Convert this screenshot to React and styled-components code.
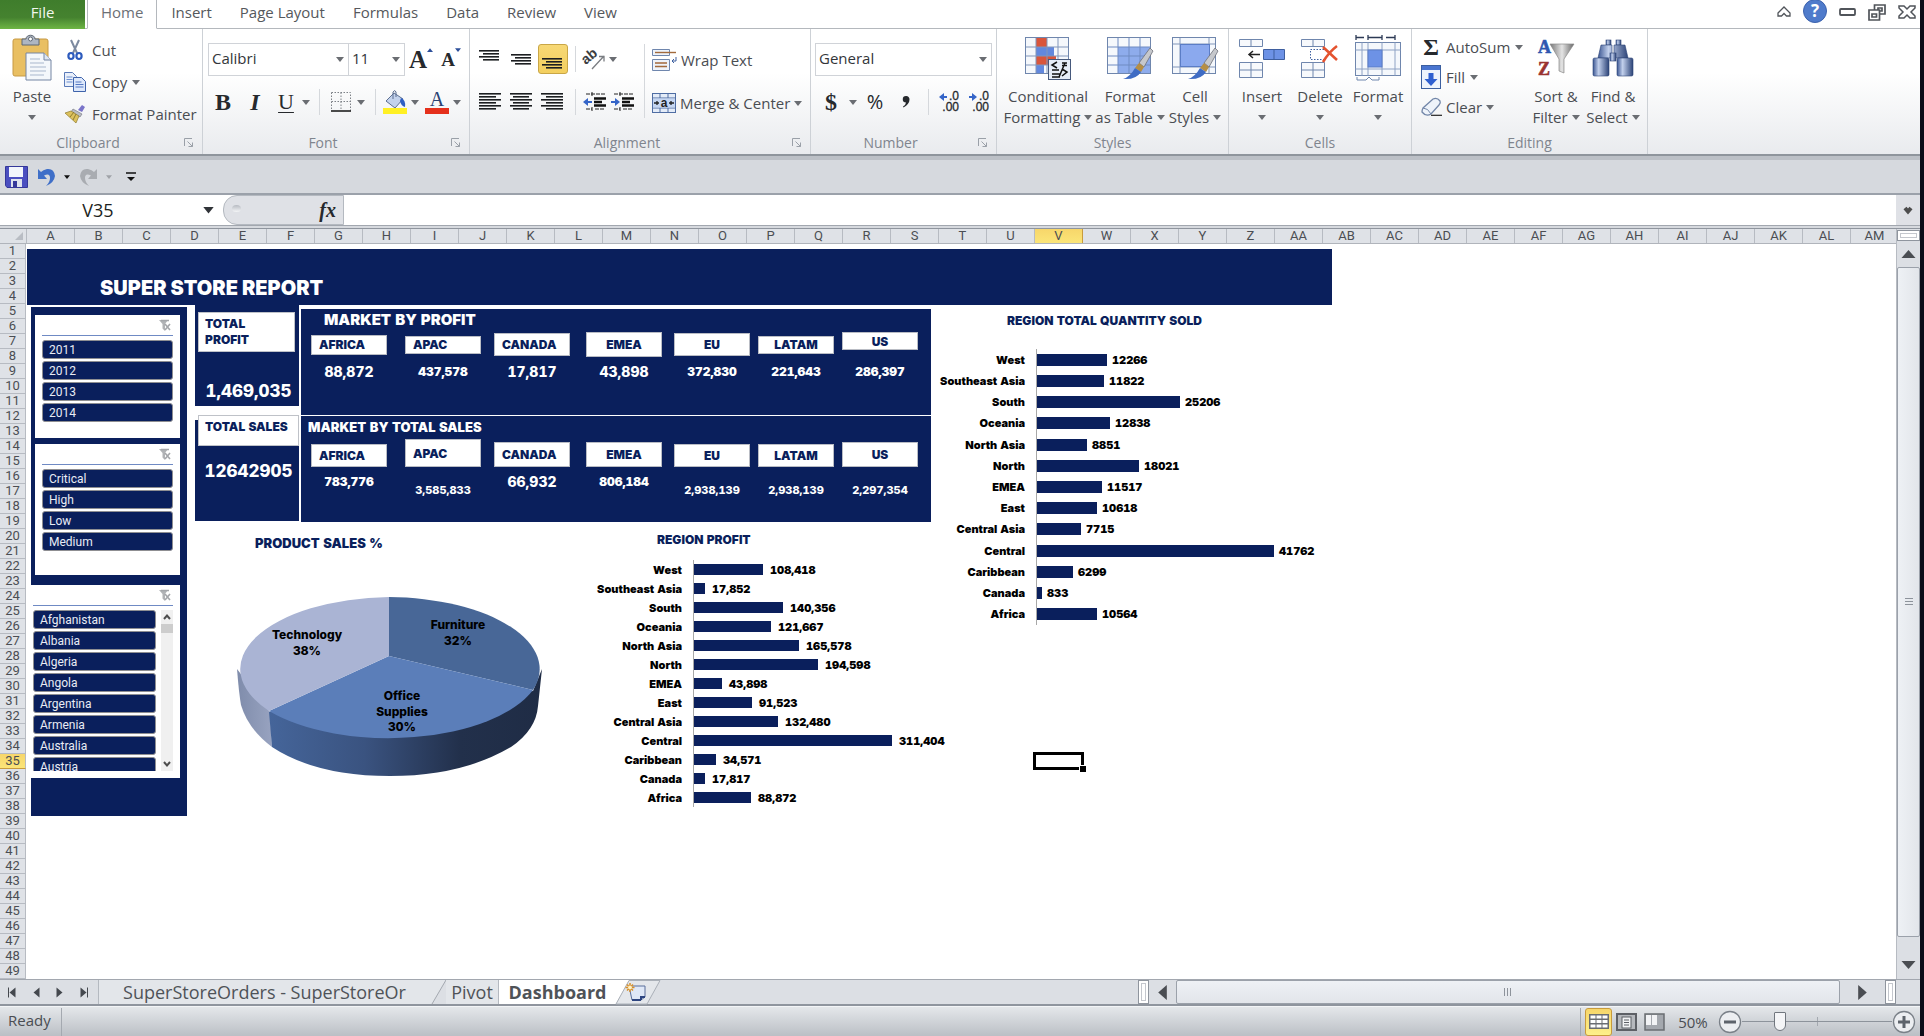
import React from 'react';
import styled, { createGlobalStyle, css } from 'styled-components';

const NAVY = '#0a1f5c';
const UI_FONT = '"Open Sans", "Noto Sans", sans-serif';
const GRID_FONT = 'Roboto, "Liberation Sans", sans-serif';
const HEAVY_FONT = 'Inter, "Liberation Sans", sans-serif';

const GlobalStyle = createGlobalStyle`
  * {
    box-sizing: border-box;
  }

  body {
    margin: 0;
    background: #0a0d18;
    font-family: ${UI_FONT};
  }

  button, input, select {
    font: inherit;
    color: inherit;
    margin: 0;
    padding: 0;
    border: none;
    border-radius: 0;
    background: none;
  }

  svg {
    display: block;
    flex: none;
    overflow: visible;
  }
`;

const Window = styled.div`
  min-height: 100vh;
  display: flex;
  flex-direction: column;
  background: #d6d9de;
  border-right: 4px solid #0a0d18;
  overflow: hidden;
`;

/* ---------- ribbon ---------- */

const TabBar = styled.nav`
  display: flex;
  height: 29px;
  background: #fff;
  border-bottom: 1px solid #b4b8bd;
  font-size: 15px;
  color: #55585c;
`;

const FileTab = styled.button`
  width: 85px;
  height: 29px;
  margin-right: 2px;
  padding-bottom: 5px;
  color: #f2f8ee;
  background: linear-gradient(#3f7d2c, #45822f 60%, #6db544);
`;

const RibbonTab = styled.button`
  height: 29px;
  padding: 0 13px 5px;
  border: 1px solid transparent;
  border-top: none;
  white-space: nowrap;

  ${props => props.$active && css`
    background: #fff;
    border-color: #b4b8bd;
    border-bottom-color: #fff;
    color: #6c6f75;
  `}
`;

const WindowControls = styled.div`
  display: flex;
  align-items: center;
  gap: 12px;
  height: 24px;
  margin-left: auto;
  padding-right: 4px;
`;

const IconButton = styled.button`
  display: flex;
  align-items: center;
  justify-content: center;
  flex: none;
  width: ${props => props.$w || 24}px;
  height: ${props => props.$h || 30}px;
`;

const Ribbon = styled.div`
  display: flex;
  height: 127px;
  background: linear-gradient(#fff 35%, #e9ebee);
  border-bottom: 2px solid #8f959c;
  color: #4a4d52;
  font-size: 15px;
`;

const Group = styled.section`
  display: flex;
  flex-direction: column;
  flex: none;
  width: ${props => props.$w}px;
  border-right: 1px solid #cdd1d6;
`;

const GroupBody = styled.div`
  display: flex;
  height: 102px;
  padding-left: ${props => props.$pad || 4}px;
`;

const GroupFooter = styled.div`
  display: grid;
  grid-template-columns: 1fr ${props => (props.$launcher ? '26px' : '')};
  align-items: center;
  justify-items: center;
  height: 23px;
  color: #7f858e;
`;

const GroupName = styled.h2`
  margin: 0;
  font-size: 14px;
  font-weight: 400;
`;

const Stack = styled.div`
  display: flex;
  flex-direction: column;
  gap: ${props => props.$gap || 0}px;
  padding-top: ${props => props.$top || 0}px;
  width: ${props => (props.$w ? `${props.$w}px` : 'auto')};
`;

const ToolRow = styled.div`
  display: flex;
  align-items: center;
  height: ${props => props.$h || 32}px;
`;

const Divider = styled.span`
  flex: none;
  width: 1px;
  height: ${props => props.$h || 26}px;
  margin: 0 7px;
  background: #d5d8dc;
`;

const SmallButton = styled.button`
  display: flex;
  align-items: center;
  gap: ${props => props.$gap || 6}px;
  height: ${props => props.$h || 32}px;
  white-space: nowrap;
`;

const IconSlot = styled.span`
  display: flex;
  justify-content: center;
  width: ${props => props.$w}px;
`;

const BigButton = styled.button`
  display: flex;
  flex-direction: column;
  align-items: center;
  width: ${props => props.$w}px;
  padding-top: 5px;
  line-height: 21px;
  white-space: nowrap;
`;

const BigIcon = styled.span`
  display: flex;
  align-items: center;
  height: 48px;
  margin-bottom: 4px;
`;

const BigLine = styled.span`
  display: flex;
  align-items: center;
  gap: 4px;
  height: 21px;
`;

const Combo = styled.div`
  display: grid;
  align-items: center;
  width: ${props => props.$w}px;
  height: 33px;
  border: 1px solid #d0d3d8;
  background: #fff;
  margin-right: ${props => (props.$joined ? -1 : 0)}px;

  > * {
    grid-area: 1 / 1;
  }

  > svg {
    justify-self: end;
    margin-right: 4px;
    pointer-events: none;
  }
`;

const ComboSelect = styled.select`
  appearance: none;
  width: 100%;
  height: 100%;
  padding: 0 14px 3px 3px;
  color: #33363a;
`;

const Glyph = styled.span`
  font-family: ${props => (props.$sans ? UI_FONT : '"Liberation Serif", serif')};
  font-size: ${props => props.$size || 24}px;
  font-weight: ${props => (props.$light ? 400 : 700)};
  font-style: ${props => (props.$italic ? 'italic' : 'normal')};
  text-decoration: ${props => (props.$underline ? 'underline' : 'none')};
  text-decoration-thickness: 1px;
  text-underline-offset: 3px;
  line-height: 1;
  color: #26292d;
`;

const SizeButton = styled(IconButton)`
  > svg {
    align-self: flex-start;
    margin-top: 4px;
  }
`;

const Pressed = styled(IconButton)`
  border: 1px solid #c9a646;
  border-radius: 3px;
  background: linear-gradient(#f7d875, #f3cf5f);
`;

/* ---------- quick access and formula bar ---------- */

const QuickAccess = styled.div`
  display: flex;
  align-items: center;
  height: 39px;
  padding: 1px 0 0 4px;
  border-top: 4px solid #bcc0c6;
  border-bottom: 2px solid #9ba1aa;
  background: #d6d9de;
`;

const FormulaBar = styled.div`
  display: flex;
  height: 31px;
  background: #dfe1e6;
  border-bottom: 1px solid #a2a7af;
`;

const NameBox = styled.div`
  display: flex;
  align-items: center;
  width: 223px;
  background: #fff;
`;

const NameInput = styled.input`
  width: 196px;
  text-align: center;
  font-size: 18px;
  color: #1d1f22;
`;

const FxArea = styled.div`
  display: flex;
  align-items: center;
  width: 121px;
  background: #fff;
`;

const FxPill = styled.div`
  display: flex;
  align-items: center;
  justify-content: space-between;
  width: 100%;
  height: 100%;
  padding: 0 7px 0 8px;
  border: 1px solid #b4b9c0;
  border-radius: 14px 0 0 14px;
  background: #dfe1e6;
`;

const FxDot = styled.span`
  width: 9px;
  height: 7px;
  margin-bottom: 3px;
  border-radius: 50%;
  background: linear-gradient(#b6bac1, #f4f5f7);
`;

const FormulaInput = styled.input`
  flex: 1;
  background: #fff;
`;

/* ---------- sheet ---------- */

const Workbook = styled.main`
  display: flex;
  flex: 1;
  margin-top: 2px;
  background: #dfe2e7;
  border-top: 1px solid #8f959e;
`;

const SheetArea = styled.div`
  flex: 1;
  min-width: 0;
  overflow: hidden;
  background: #fff;
`;

const ColumnHeads = styled.div`
  display: flex;
  height: 15px;
  background: #dfe2e7;
  border-bottom: 1px solid #b0b4bb;
`;

const Corner = styled.div`
  display: flex;
  justify-content: flex-end;
  align-items: flex-end;
  flex: none;
  width: 27px;
  padding: 3px;
  border-right: 1px solid #b7bbc2;
`;

const headCell = css`
  display: flex;
  align-items: center;
  justify-content: center;
  flex: none;
  font-family: ${GRID_FONT};
  font-size: 13px;
  line-height: 14px;
  color: #4b4e53;
  background: ${props => (props.$active ? 'linear-gradient(#f7d66a, #fbe578)' : '#dfe2e7')};
`;

const ColumnHead = styled.div`
  ${headCell}
  width: 48px;
  border-right: 1px solid ${props => (props.$active ? '#c89b3c' : '#b7bbc2')};
`;

const SheetBody = styled.div`
  display: flex;
`;

const RowHeads = styled.div`
  flex: none;
  width: 26px;
`;

const RowHead = styled.div`
  ${headCell}
  height: 15px;
  border-right: 1px solid #b7bbc2;
  border-bottom: 1px solid ${props => (props.$active ? '#c89b3c' : '#b7bbc2')};
`;

const Canvas = styled.div`
  position: relative;
  flex: 1;
  min-width: 0;
  padding: 5px 0 0 1px;
`;

const ActiveCell = styled.div`
  position: absolute;
  left: ${props => props.$col * 48 - 1}px;
  top: ${props => props.$row * 15 - 2}px;
  width: 51px;
  height: 18px;
  border: 3px solid #000;

  &::after {
    content: '';
    position: absolute;
    right: -5px;
    bottom: -5px;
    width: 6px;
    height: 6px;
    border: 1px solid #fff;
    border-width: 1px 0 0 1px;
    background: #000;
  }
`;

/* ---------- dashboard ---------- */

const Banner = styled.h1`
  width: 1305px;
  height: 56px;
  margin: 0;
  padding: 27px 0 0 73px;
  background: ${NAVY};
  color: #fff;
  font-family: ${HEAVY_FONT};
  font-size: 20px;
  font-weight: 900;
  line-height: 24px;
`;

const Dashboard = styled.div`
  display: flex;
  align-items: flex-start;
  font-family: ${HEAVY_FONT};
  font-weight: 800;
  font-variant-numeric: tabular-nums;
`;

const SlicerColumn = styled.aside`
  width: 156px;
  margin: 2px 8px 0 4px;
  padding: 8px 0 38px;
  background: ${NAVY};
`;

const Slicer = styled.section`
  width: ${props => (props.$scroll ? 149 : 145)}px;
  height: ${props => props.$h}px;
  margin: 0 0 ${props => props.$after || 0}px ${props => (props.$scroll ? 0 : 4)}px;
  padding: 0 7px 0 ${props => (props.$scroll ? 2 : 7)}px;
  background: #fff;
`;

const SlicerHead = styled.div`
  display: flex;
  align-items: center;
  justify-content: flex-end;
  height: 21px;
  padding-right: 2px;
  border-bottom: 1px solid #6f8ac4;
`;

const SlicerBody = styled.div`
  display: flex;
  gap: 5px;
  height: 165px;
  padding-top: 4px;
`;

const SlicerList = styled.div`
  display: flex;
  flex-direction: column;
  flex: 1;
  gap: 2px;
  overflow: hidden;
`;

const SlicerItem = styled.button`
  flex: none;
  height: 19px;
  padding: 0 6px;
  border: 1px solid #8f8f92;
  border-radius: 3px;
  background: ${NAVY};
  color: #e9ecf4;
  font-family: ${GRID_FONT};
  font-size: 12px;
  font-weight: 400;
  line-height: 16px;
  text-align: left;
`;

const SlicerScroll = styled.div`
  display: flex;
  flex-direction: column;
  align-items: center;
  width: 12px;
  background: #f0f0f0;
`;

const SlicerThumb = styled.span`
  width: 12px;
  height: 9px;
  margin-bottom: auto;
  background: #cdcdcd;
`;

const Middle = styled.div`
  width: 736px;
`;

const Row = styled.div`
  display: flex;
  align-items: flex-start;
`;

const KpiColumn = styled.div`
  display: flex;
  flex-direction: column;
  gap: 9px;
  width: 104px;
  margin-right: 2px;
`;

const Kpi = styled.section`
  padding: ${props => (props.$raised ? 0 : 7)}px 0 0 3px;
  height: ${props => (props.$raised ? 106 : 101)}px;
  background: ${props => (props.$raised ? `linear-gradient(#fff 5px, ${NAVY} 5px)` : NAVY)};
  color: #fff;
`;

const KpiLabel = styled.h2`
  width: ${props => (props.$wide ? 101 : 97)}px;
  height: ${props => (props.$wide ? 31 : 40)}px;
  margin: 0;
  padding: 3px 0 0 6px;
  border: 1px solid #bfc2c8;
  background: #fff;
  color: ${NAVY};
  font-size: 12px;
  font-weight: 900;
  line-height: 16px;
`;

const KpiValue = styled.p`
  margin: ${props => props.$top}px 0 0;
  font-size: 17px;
  line-height: 20px;
  text-align: center;
`;

const Markets = styled.div`
  display: grid;
  gap: 1px;
  width: 630px;
  margin-top: 4px;
`;

const Market = styled.section`
  height: 106px;
  background: ${NAVY};
  color: #fff;
`;

const MarketTitle = styled.h2`
  margin: 0;
  height: 23px;
  padding: 3px 0 0 ${props => (props.$small ? 7 : 23)}px;
  font-size: ${props => (props.$small ? 13 : 15)}px;
  font-weight: 900;
  line-height: 16px;
`;

const MarketGrid = styled.div`
  display: grid;
  grid-template-columns: 94px 89px 92px 88px 84px 84px 75px;
  padding-left: 10px;
`;

const MarketCell = styled.div`
  display: grid;
  grid-template-rows: ${props => props.$band}px auto;
  width: 76px;
`;

const MarketTag = styled.h3`
  display: flex;
  align-items: center;
  justify-content: ${props => (props.$centered ? 'center' : 'flex-start')};
  align-self: ${props => props.$align || 'center'};
  height: ${props => props.$h}px;
  margin: 0;
  padding: 0 7px;
  border: 1px solid #b9bcc4;
  background: #fff;
  color: ${NAVY};
  font-size: 12px;
  font-weight: 900;
`;

const sizes = { lg: 14, md: 12, sm: 11 };

const MarketValue = styled.p`
  margin: 0;
  padding-top: ${props => (props.$size === 'sm' ? 15 : 7)}px;
  font-size: ${props => sizes[props.$size]}px;
  font-weight: ${props => (props.$size === 'md' ? 900 : 800)};
  line-height: 16px;
  text-align: center;
`;

const ChartTitle = styled.h2`
  margin: 0;
  padding: ${props => props.$top}px 0 0 ${props => props.$indent}px;
  height: ${props => props.$h}px;
  font-size: ${props => props.$size || 12}px;
  font-weight: 900;
  line-height: 16px;
  color: ${NAVY};
  white-space: nowrap;
`;

const Chart = styled.section`
  flex: none;
  width: ${props => props.$w}px;
`;

const Bars = styled.dl`
  display: grid;
  grid-template-columns: ${props => props.$labels}px 1fr;
  grid-auto-rows: 1fr;
  column-gap: 11px;
  height: ${props => props.$h}px;
  margin: 0;
  font-size: 11px;
  font-weight: 900;
  line-height: 16px;
  color: #000;
`;

const BarLabel = styled.dt`
  display: flex;
  align-items: center;
  justify-content: flex-end;
  white-space: nowrap;
`;

const BarCell = styled.dd`
  display: flex;
  align-items: center;
  gap: ${props => props.$gap}px;
  margin: 0;
  border-left: 1px solid #a8a8a8;
`;

const Bar = styled.span`
  flex: none;
  height: ${props => props.$thick}px;
  background: ${NAVY};
`;

const PieText = styled.text`
  font-family: ${HEAVY_FONT};
  font-size: 12px;
  font-weight: 800;
  text-anchor: middle;
`;

const PieBox = styled.div`
  padding: 36px 0 0 41px;
`;

/* ---------- scrollbars, tabs and status ---------- */

const VScroll = styled.div`
  display: flex;
  flex-direction: column;
  align-items: center;
  width: 24px;
  padding-top: 1px;
  background: #dcdfe4;
  border-left: 1px solid #b7bbc2;
`;

const SplitHandle = styled.span`
  flex: none;
  width: ${props => (props.$vertical ? 11 : 23)}px;
  height: ${props => (props.$vertical ? 24 : 11)}px;
  border: 1px solid #8f959e;
  background: #fff;
  box-shadow: inset 0 0 0 2px #fff, inset 0 0 0 3px #c4c7cd;
`;

const ScrollThumb = styled.span`
  display: flex;
  align-items: center;
  justify-content: center;
  flex: 1;
  align-self: stretch;
  margin-bottom: ${props => (props.$vertical ? 14 : 0)}px;
  border: 1px solid #9ba1aa;
  border-radius: 2px;
  background: ${props => (props.$vertical
    ? 'linear-gradient(90deg, #eef1f5, #e2e5ea)'
    : 'linear-gradient(#eef1f5, #e2e5ea)')};
`;

const SheetTabs = styled.div`
  display: flex;
  align-items: flex-start;
  height: 27px;
  border-top: 1px solid #a2a7af;
  border-bottom: 2px solid #8f959e;
  background: #dcdfe4;
`;

const TabNav = styled.div`
  display: flex;
  width: 98px;
`;

const SheetTab = styled.button`
  display: flex;
  align-items: center;
  justify-content: center;
  flex: none;
  width: ${props => props.$w}px;
  height: 24px;
  padding-bottom: 1px;
  font-size: 18px;
  line-height: 22px;
  color: #4f5358;
  background: ${props => (props.$active ? '#fff' : '#e3e6ea')};
  font-weight: ${props => (props.$active ? 700 : 400)};
  border-left: ${props => (props.$edge ? '1px solid #b4b9c0' : 'none')};
  white-space: nowrap;
`;

const HScroll = styled.div`
  display: flex;
  align-items: center;
  flex: none;
  width: calc(40% - 10px);
  height: 24px;
  margin-left: auto;
  margin-right: 24px;
`;

const StatusBar = styled.footer`
  display: flex;
  align-items: center;
  height: 30px;
  border-top: 1px solid #f3f5f7;
  background: linear-gradient(#e4e7ea, #bbbfc5);
  color: #4a4d52;
  font-size: 15px;
`;

const StatusText = styled.span`
  height: 28px;
  padding: 2px 10px 0 8px;
  border-right: 1px solid #a4a9b0;
`;

const StatusTools = styled.div`
  display: flex;
  align-items: center;
  margin-left: auto;
  height: 28px;
  padding: 0 4px;
  border-left: 1px solid #a4a9b0;
`;

const ViewButton = styled(IconButton)`
  border: 1px solid ${props => (props.$active ? '#c89b3c' : 'transparent')};
  border-radius: 3px;
  background: ${props => (props.$active ? 'linear-gradient(#f7d66a, #fdf08a)' : 'none')};
`;

const ZoomSlider = styled.input`
  appearance: none;
  width: 150px;
  height: 20px;
  background:
    linear-gradient(#8d939b, #8d939b) center / 100% 1px no-repeat,
    linear-gradient(#a4a9b0, #a4a9b0) center / 1px 9px no-repeat;

  &::-webkit-slider-thumb {
    appearance: none;
    width: 12px;
    height: 19px;
    border: 1px solid #70767e;
    border-radius: 1px 1px 6px 6px;
    background: #f4f5f7;
  }
`;

/* ---------- icons ---------- */

const Caret = ({ color = '#6a6d72', size = 8, up }) => (
  <svg width={size} height={size / 2 + 1} viewBox="0 0 8 5">
    <path d={up ? 'M0 5h8L4 0z' : 'M0 0h8L4 5z'} fill={color} />
  </svg>
);

const Launcher = () => (
  <svg width="10" height="10" viewBox="0 0 10 10" fill="none" stroke="#9aa0a8">
    <path d="M.5 8V.5H8M3.500 3.500l5 5M8.500 4.500v4h-4" />
  </svg>
);

const PasteIcon = () => (
  <svg width="40" height="46" viewBox="0 0 40 46">
    <rect x="1" y="4" width="35" height="37" rx="2" fill="#e9bf62" stroke="#c79a45" />
    <path d="M10 4h4c0-5 9-5 9 0h4v6H10z" fill="#aeb6c2" stroke="#5f6874" />
    <circle cx="18.500" cy="4" r="2" fill="#fff" stroke="#5f6874" />
    <path d="M14 18h18l7 7v20H14z" fill="#f4f7fb" stroke="#7485a3" />
    <path d="M32 18v7h7" fill="#dfe6f0" stroke="#7485a3" />
    <path d="M18 24h10M18 28h14M18 32h16M18 36h16M18 40h14" stroke="#a9b7cd" />
  </svg>
);

const CutIcon = () => (
  <svg width="16" height="20" viewBox="0 0 16 20" fill="none">
    <path d="M4 0l6 13M12 0L6 13" stroke="#7d8aa0" strokeWidth="2" />
    <ellipse cx="4" cy="16" rx="2.600" ry="3" stroke="#2d5bbd" strokeWidth="2.200" />
    <ellipse cx="12" cy="16" rx="2.600" ry="3" stroke="#2d5bbd" strokeWidth="2.200" />
  </svg>
);

const CopyIcon = () => (
  <svg width="22" height="20" viewBox="0 0 22 20">
    <path d="M.5.5h8l4 4v10H.5z" fill="#eaf0fa" stroke="#5a7ab8" />
    <path d="M2.500 5h6M2.500 7.500h6M2.500 10h6" stroke="#6c8fd0" />
    <path d="M9.500 5.500h8l4 4v10h-12z" fill="#dde8fb" stroke="#3f63ab" />
    <path d="M11.500 10h6M11.500 12.500h8M11.500 15h8" stroke="#5579c4" />
  </svg>
);

const PainterIcon = () => (
  <svg width="20" height="18" viewBox="0 0 20 18">
    <path d="M13 5l4-5 3 2-3 5z" fill="#7a74c9" />
    <path d="M8 4l9 5-2 3-9-5z" fill="#b9bcc4" stroke="#6d7078" strokeWidth=".6" />
    <path d="M6 6l8 5-3 7L0 8z" fill="#dcc15c" stroke="#8f7b2f" strokeWidth=".7" />
    <path d="M5 12l4-5M8 15l3-6" stroke="#8f7b2f" />
  </svg>
);

const BordersIcon = () => (
  <svg width="20" height="20" viewBox="0 0 20 20" fill="none">
    <path d="M.5.5h19v18M.5.5v18M10 .5v18M.5 9.500h19" stroke="#7d8187" strokeDasharray="1.500 1.500" />
    <path d="M0 19h20" stroke="#111" strokeWidth="1.500" />
  </svg>
);

const FillColorIcon = () => (
  <svg width="24" height="24" viewBox="0 0 24 24">
    <path d="M3 11l8-8 9 6-8 9z" fill="#c3d2ec" stroke="#5d6f91" />
    <path d="M10 9V2q2-3 3 0v5" fill="none" stroke="#5d6f91" />
    <path d="M18 8q5 2 4 9-4-1-5-6z" fill="#2f5fc4" />
    <rect y="18" width="24" height="6" fill="#fff024" />
  </svg>
);

const FontColorIcon = () => (
  <svg width="24" height="24" viewBox="0 0 24 24">
    <text x="12" y="16" textAnchor="middle" fontFamily="Liberation Serif" fontSize="20" fill="#2a4272">A</text>
    <rect y="18" width="24" height="6" fill="#e5301c" />
  </svg>
);

const CommaIcon = () => (
  <svg width="8" height="12" viewBox="0 0 8 12">
    <path d="M4 0a3.200 3.200 0 0 1 3.500 3.500Q7.500 8 1.500 11.500L1 10.500Q4 8.500 4 6.500A3.200 3.200 0 0 1 4 0z" fill="#26292d" />
  </svg>
);

const LINES = {
  top: [[0, 20], [4, 16], [0, 20], [4, 16]],
  center: [[0, 22], [3, 16], [0, 22], [3, 16], [0, 22], [3, 16]],
  left: [[0, 22], [0, 17], [0, 22], [0, 17], [0, 22], [0, 17]],
  right: [[0, 22], [5, 17], [0, 22], [5, 17], [0, 22], [5, 17]],
};

const LinesIcon = ({ kind, offset = 0 }) => (
  <svg width="22" height="26" viewBox="0 0 22 26">
    {LINES[kind].map(([x, w], i) => (
      <rect key={i} x={x} y={offset + 4 + i * 3} width={w} height="1.600" fill="#1c1e21" />
    ))}
  </svg>
);

const OrientationIcon = () => (
  <svg width="24" height="24" viewBox="0 0 24 24">
    <text x="1" y="15" transform="rotate(-40 6 14)" fontFamily="Liberation Sans" fontSize="14" fontWeight="700" fill="#3a3d41">ab</text>
    <path d="M9 22L21 9M16 9.500h5v5" fill="none" stroke="#7a7d82" strokeWidth="1.300" />
  </svg>
);

const IndentIcon = ({ flip }) => (
  <svg width="24" height="20" viewBox="0 0 24 20">
    <path d={flip ? 'M0 9h4V6l5 4-5 4v-3H0z' : 'M9 9H5V6l-5 4 5 4v-3h4z'} fill="#3565c8" />
    <path d="M3 2h20M3 17h6M12 17h9M9 0v4M9 15v4" stroke="#222" strokeDasharray="4 1" />
    <path d="M11 6.500h12M11 10h8M11 13.500h12" stroke="#111" strokeWidth="2.600" />
  </svg>
);

const WrapIcon = () => (
  <svg width="25" height="22" viewBox="0 0 25 22" fill="none">
    <path d="M.5.5h17v6H.5z" fill="#eef3fa" stroke="#6f86ad" />
    <path d="M3 3.500h21" stroke="#a26a3c" strokeWidth="1.400" />
    <path d="M.5 10.500h17v11H.5z" fill="#eef3fa" stroke="#6f86ad" />
    <path d="M3 14h12M3 17.500h12" stroke="#a26a3c" strokeWidth="1.400" />
    <path d="M24 8v4h-4M22 10l-2 2 2 2" stroke="#3c5f9f" />
  </svg>
);

const MergeIcon = () => (
  <svg width="24" height="20" viewBox="0 0 24 20">
    <rect x=".5" y=".5" width="23" height="19" fill="#e4ecf8" stroke="#4f6da3" />
    <path d="M.5 5h23M.5 15h23M8 .5V5M16 .5V5M8 15v4.500M16 15v4.500" stroke="#4f6da3" />
    <rect x="1" y="5.500" width="22" height="9" fill="#c5d6f2" />
    <path d="M2 10h5M5 8v4M17 10h5M19 8v4" stroke="#222" strokeWidth="1.300" />
    <text x="12" y="14" textAnchor="middle" fontFamily="Liberation Sans" fontSize="12" fontWeight="700" fill="#222">a</text>
  </svg>
);

const DecimalIcon = ({ flip }) => (
  <svg width="21" height="20" viewBox="0 0 21 20">
    <path d={flip ? 'M0 4h3V1l5 4-5 4V6H0z' : 'M8 4H5V1L0 5l5 4V6h3z'} fill="#3565c8" />
    <g fontFamily="Liberation Sans" fontSize="12" fill="#26292d" stroke="#26292d" strokeWidth=".3">
      <text x="20" y="8" textAnchor="end">.0</text>
      <text x="20" y="19" textAnchor="end">.00</text>
    </g>
  </svg>
);

const TableGrid = ({ children }) => (
  <svg width="48" height="44" viewBox="0 0 48 44">
    <rect x="1.500" y="1.500" width="43" height="36" fill="#f5f8fc" stroke="#6f86ad" />
    {children}
  </svg>
);

const Brush = () => (
  <g>
    <path d="M44 12l3 3-9 16-5-4z" fill="#c6c8cc" stroke="#6d7078" strokeWidth=".8" />
    <path d="M33 27l5 4-3 5-6-4z" fill="#b58e45" />
    <path d="M29 32l6 4q-5 8-18 7 7-2 12-11z" fill="#3f6cc4" />
  </g>
);

const ConditionalIcon = () => (
  <TableGrid>
    <rect x="12" y="2" width="11" height="9" fill="#d9553b" />
    <rect x="12" y="11" width="18" height="9" fill="#6288de" />
    <rect x="12" y="20" width="20" height="9" fill="#d9553b" />
    <rect x="12" y="29" width="8" height="8" fill="#6288de" />
    <path d="M12 2v35M23 2v35M34 2v35M2 11h42M2 20h42M2 29h42" stroke="#8196ba" fill="none" />
    <rect x="24.500" y="23.500" width="22" height="20" fill="#e6edf7" stroke="#46597c" />
    <path d="M33 26l-5 3 5 3M28 34h7M28 38h8M28 41h8M38 27h5M38 29.500h5M38 33l5 3-5 4M35 41l6-14" stroke="#111" strokeWidth="1.500" fill="none" />
  </TableGrid>
);

const FormatTableIcon = () => (
  <TableGrid>
    <rect x="12" y="11" width="32" height="26" fill="#8eacec" />
    <path d="M12 2v35M23 2v35M34 2v35M2 11h42M2 20h42M2 29h42" stroke="#6f8bc2" fill="none" />
    <Brush />
  </TableGrid>
);

const CellStylesIcon = () => (
  <TableGrid>
    <path d="M9 2v35M38 2v35M2 8h42M2 31h42" stroke="#8196ba" fill="none" />
    <rect x="9.500" y="8.500" width="29" height="22" fill="#8ba9ee" stroke="#5b7dc6" />
    <Brush />
  </TableGrid>
);

const InsertIcon = () => (
  <svg width="48" height="40" viewBox="0 0 48 40" fill="#f7f9fc" stroke="#6f86ad">
    <path d="M1.500 1.500h23v7h-23zM13 1.500v7M1.500 24.500h23v15h-23zM13 24.500v15M1.500 32h23" />
    <path d="M25.500 11.500h21v10h-21z" fill="#6d92e6" stroke="#3f5f9f" />
    <path d="M36 11.500v10" stroke="#3f5f9f" />
    <path d="M22 16.500H12M15 13l-4 3.500 4 3.500" fill="none" stroke="#222" strokeWidth="1.500" />
  </svg>
);

const DeleteIcon = () => (
  <svg width="40" height="40" viewBox="0 0 40 40" fill="#f7f9fc" stroke="#6f86ad">
    <path d="M1.500 1.500h23v7h-23zM13 1.500v7M1.500 24.500h23v15h-23zM13 24.500v15M1.500 32h23" />
    <path d="M24 11.500H10.500v10H24" fill="none" stroke="#3c5f9f" strokeDasharray="1.500 1.500" />
    <path d="M23 9l14 13M37 8Q29 14 23 24" fill="none" stroke="#e4532f" strokeWidth="2.600" />
  </svg>
);

const FormatCellsIcon = () => (
  <svg width="48" height="46" viewBox="0 0 48 46" fill="none" stroke="#6f86ad">
    <path d="M2 0v5M14 0v5M28 0v5M41 0v5M2 2.500h8M14 2.500h14M32 2.500h9" stroke="#2c3a55" strokeWidth="1.300" />
    <rect x="1.500" y="7.500" width="45" height="33" fill="#f5f8fc" />
    <path d="M14 7.500v33M28 7.500v33M41 7.500v33M8 7.500v33M1.500 15h45M1.500 34h45" stroke="#8ea2c4" />
    <rect x="14" y="15" width="14" height="17" fill="#6d92e6" stroke="#5b7dc6" />
    <path d="M3 42v3h9l3-3 3 3h7v-3" />
  </svg>
);

const FillIcon = () => (
  <svg width="20" height="24" viewBox="0 0 20 24">
    <rect x=".5" y=".5" width="19" height="23" fill="#eef3fc" stroke="#3c5f9f" />
    <rect x="1" y="1" width="18" height="4" fill="#4a75d0" />
    <path d="M7.500 8h5v6h4L10 21l-6.500-7h4z" fill="#2f5fd0" />
  </svg>
);

const ClearIcon = () => (
  <svg width="21" height="18" viewBox="0 0 21 18">
    <path d="M12 1q4-2 7 2 1 2-1 4L10 16q-5 3-9-2 0-2 1-4z" fill="#eef3fa" stroke="#7286a8" strokeWidth="1.300" />
    <path d="M2 10q5 0 8 6" fill="none" stroke="#7286a8" />
    <path d="M10 17.300h11" stroke="#222" strokeWidth="1.200" />
  </svg>
);

const SortIcon = () => (
  <svg width="38" height="40" viewBox="0 0 38 40">
    <defs>
      <linearGradient id="funnel">
        <stop offset="0" stopColor="#777" />
        <stop offset=".5" stopColor="#e4e4e4" />
        <stop offset="1" stopColor="#666" />
      </linearGradient>
    </defs>
    <path d="M13 6h24L27 21v14l-5-2V21z" fill="url(#funnel)" stroke="#8a8a8a" strokeWidth=".7" />
    <g fontFamily="Liberation Serif" fontSize="18" fontWeight="700" strokeWidth=".6">
      <text x="1" y="15" fill="#2f57b0" stroke="#2f57b0">A</text>
      <text x="1" y="37" fill="#9a3330" stroke="#9a3330">Z</text>
    </g>
  </svg>
);

const FindIcon = () => (
  <svg width="42" height="38" viewBox="0 0 42 38">
    <defs>
      <linearGradient id="barrel">
        <stop offset="0" stopColor="#3b5692" />
        <stop offset=".35" stopColor="#c2d0ec" />
        <stop offset="1" stopColor="#2c4377" />
      </linearGradient>
    </defs>
    <g fill="url(#barrel)" stroke="#2c4377" strokeWidth=".6">
      <rect x="14" y="1" width="5" height="5" />
      <rect x="24" y="1" width="5" height="5" />
      <path d="M9 6h11v13H6zM22 6h11l3 13H22z" />
      <rect x="18" y="14" width="6" height="8" />
      <rect x="1" y="19" width="16" height="18" rx="1.500" />
      <rect x="25" y="19" width="16" height="18" rx="1.500" />
    </g>
  </svg>
);

const SaveIcon = () => (
  <svg width="23" height="22" viewBox="0 0 23 22">
    <path d="M.5.5h22v21H2l-1.500-2z" fill="#4b4fc0" stroke="#35389a" />
    <rect x="4" y="1" width="14" height="10" fill="#f3f6fc" />
    <rect x="6" y="13" width="11" height="8" fill="#dfe3ee" />
    <rect x="8" y="15" width="4" height="6" fill="#35389a" />
  </svg>
);

const UndoIcon = ({ color = '#3f6fc8', flip }) => (
  <svg width="19" height="20" viewBox="0 0 19 20">
    <path
      transform={flip ? 'matrix(-1 0 0 1 19 0)' : undefined}
      d="M1 2v10h9L7 8.500Q13 5.500 13 11q0 4-4 8 8-3 9-10Q17 1 10 2 6 3 4 5z"
      fill={color}
    />
  </svg>
);

const FilterClearIcon = () => (
  <svg width="12" height="12" viewBox="0 0 12 12" fill="none">
    <path d="M0 1h9L6 5v7L3.500 9.500V5z" fill="#b1b3b6" />
    <path d="M6 5l5 6M11 5l-5 6M2 1.500h8" stroke="#a4a6aa" strokeWidth="1.600" />
  </svg>
);

const Chevron = ({ up, heavy }) => (
  <svg width="12" height="14" viewBox="0 0 12 14" fill="none">
    <path d={up ? 'M3 9l3-3.500L9 9' : 'M3 5l3 3.500L9 5'} stroke="#4d4d4d" strokeWidth={heavy ? 4 : 2} />
  </svg>
);

const NavArrow = ({ left, bar }) => (
  <svg width="10" height="11" viewBox="0 0 10 10">
    <path d={left ? 'M8.500 0v10L2.500 5z' : 'M1.500 0v10l6-5z'} fill="#44484e" />
    {bar && <path d={left ? 'M1.500 0v10' : 'M8.500 0v10'} stroke="#44484e" />}
  </svg>
);

const Triangle = ({ dir }) => {
  const paths = { up: 'M7 0l7 8H0z', down: 'M0 0h14L7 8z', left: 'M8 0v14L0 7z', right: 'M0 0v14l8-7z' };
  const tall = dir === 'left' || dir === 'right';
  return (
    <svg width={tall ? 9 : 15} height={tall ? 15 : 8} viewBox={tall ? '0 0 8 14' : '0 0 14 8'}>
      <path d={paths[dir]} fill="#4a4d52" />
    </svg>
  );
};

const Grip = ({ vertical }) => (
  <svg width="8" height="8" viewBox="0 0 8 8" stroke="#8d939b">
    <path d={vertical ? 'M0 .5h8M0 3.500h8M0 6.500h8' : 'M.5 0v8M3.500 0v8M6.500 0v8'} />
  </svg>
);

const RoundIcon = ({ plus }) => (
  <svg width="24" height="24" viewBox="0 0 24 24">
    <circle cx="12" cy="12" r="10.500" fill="#eceef1" stroke="#7a8088" strokeWidth="1.300" />
    <path d={plus ? 'M6 12h12M12 6v12' : 'M6 12h12'} stroke="#5d636b" strokeWidth="3" />
  </svg>
);

const TabSlant = () => (
  <svg width="16" height="24" viewBox="0 0 16 24">
    <path d="M0 0h16L2 24H0z" fill="#e3e6ea" />
    <path d="M16 0L2 24" stroke="#a4a9b0" />
  </svg>
);

const NewSheetIcon = () => (
  <svg width="44" height="24" viewBox="0 0 44 24">
    <path d="M0 24V0h13z" fill="#fff" />
    <path d="M0 24L13 .5h31L31 24z" fill="#e4e7eb" stroke="#aab0b8" />
    <path d="M13 6h16v11l-4 3H16z" fill="#dfe8f7" stroke="#5b6f9b" />
    <path d="M25 20v-3h4M16 20h9" stroke="#2d4580" strokeWidth="2" fill="none" />
    <path d="M14 3v9M9.500 7.500h9M11 4.500l6 6M17 4.500l-6 6" stroke="#d9902a" strokeWidth="1.500" />
    <circle cx="14" cy="7.500" r="2" fill="#fff2c4" />
  </svg>
);

/* ---------- data ---------- */

const columnName = i => (i < 26 ? String.fromCharCode(65 + i) : `A${String.fromCharCode(39 + i)}`);
const COLUMNS = Array.from({ length: 39 }, (_, i) => columnName(i));
const ROWS = Array.from({ length: 49 }, (_, i) => i + 1);

const TABS = ['Insert', 'Page Layout', 'Formulas', 'Data', 'Review', 'View'];

const COUNTRIES = ['Afghanistan', 'Albania', 'Algeria', 'Angola', 'Argentina', 'Armenia', 'Australia', 'Austria'];

const PROFIT_BY_MARKET = [
  { name: 'AFRICA', value: '88,872', h: 20, size: 'lg' },
  { name: 'APAC', value: '437,578', h: 18, size: 'md' },
  { name: 'CANADA', value: '17,817', h: 23, size: 'lg' },
  { name: 'EMEA', value: '43,898', h: 25, size: 'lg', centered: true },
  { name: 'EU', value: '372,830', h: 23, size: 'md', centered: true },
  { name: 'LATAM', value: '221,643', h: 18, size: 'md', centered: true },
  { name: 'US', value: '286,397', h: 18, size: 'md', centered: true, align: 'start' },
];

const SALES_BY_MARKET = [
  { name: 'AFRICA', value: '783,776', h: 23, size: 'md' },
  { name: 'APAC', value: '3,585,833', h: 28, size: 'sm' },
  { name: 'CANADA', value: '66,932', h: 25, size: 'lg' },
  { name: 'EMEA', value: '806,184', h: 25, size: 'md', centered: true },
  { name: 'EU', value: '2,938,139', h: 23, size: 'sm', centered: true },
  { name: 'LATAM', value: '2,938,139', h: 23, size: 'sm', centered: true },
  { name: 'US', value: '2,297,354', h: 25, size: 'sm', centered: true },
];

const REGION_PROFIT = [
  ['West', 108418], ['Southeast Asia', 17852], ['South', 140356], ['Oceania', 121667],
  ['North Asia', 165578], ['North', 194598], ['EMEA', 43898], ['East', 91523],
  ['Central Asia', 132480], ['Central', 311404], ['Caribbean', 34571], ['Canada', 17817], ['Africa', 88872],
];

const REGION_QUANTITY = [
  ['West', 12266], ['Southeast Asia', 11822], ['South', 25206], ['Oceania', 12838],
  ['North Asia', 8851], ['North', 18021], ['EMEA', 11517], ['East', 10618],
  ['Central Asia', 7715], ['Central', 41762], ['Caribbean', 6299], ['Canada', 833], ['Africa', 10564],
];

/* ---------- pieces ---------- */

const RibbonGroup = ({ name, w, pad, launcher, children }) => (
  <Group $w={w}>
    <GroupBody $pad={pad}>{children}</GroupBody>
    <GroupFooter $launcher={launcher}>
      <GroupName>{name}</GroupName>
      {launcher && <button aria-label={`${name} settings`}><Launcher /></button>}
    </GroupFooter>
  </Group>
);

const Big = ({ w, icon, top, bottom, arrow }) => (
  <BigButton $w={w}>
    <BigIcon>{icon}</BigIcon>
    <BigLine>{top}</BigLine>
    <BigLine>{bottom}{arrow && <Caret />}</BigLine>
  </BigButton>
);

const Tool = ({ label, w, h, children }) => (
  <IconButton aria-label={label} $w={w} $h={h}>{children}</IconButton>
);

const Picker = ({ label, value, w, joined }) => (
  <Combo $w={w} $joined={joined}>
    <ComboSelect aria-label={label} defaultValue={value}>
      <option>{value}</option>
    </ComboSelect>
    <Caret />
  </Combo>
);

const MarketPanel = ({ title, small, band, items }) => (
  <Market>
    <MarketTitle $small={small}>{title}</MarketTitle>
    <MarketGrid>
      {items.map(item => (
        <MarketCell key={item.name} $band={band}>
          <MarketTag $h={item.h} $centered={item.centered} $align={item.align || (small ? 'end' : 'center')}>
            {item.name}
          </MarketTag>
          <MarketValue $size={item.size}>{item.value}</MarketValue>
        </MarketCell>
      ))}
    </MarketGrid>
  </Market>
);

const BarChart = ({ data, labels, h, thick, span, gap, format }) => {
  const max = Math.max(...data.map(d => d[1]));
  return (
    <Bars $labels={labels} $h={h}>
      {data.map(([name, value]) => (
        <React.Fragment key={name}>
          <BarLabel>{name}</BarLabel>
          <BarCell $gap={gap}>
            <Bar $thick={thick} style={{ width: Math.round((value / max) * span) }} />
            {format(value)}
          </BarCell>
        </React.Fragment>
      ))}
    </Bars>
  );
};

const PieChart = () => (
  <svg width="308" height="182" viewBox="0 0 308 182">
    <defs>
      <linearGradient id="side">
        <stop offset="0" stopColor="#45659a" />
        <stop offset=".35" stopColor="#3a5380" />
        <stop offset=".7" stopColor="#22304b" />
        <stop offset="1" stopColor="#1f2c45" />
      </linearGradient>
      <linearGradient id="sideLight">
        <stop offset="0" stopColor="#7f8cab" />
        <stop offset="1" stopColor="#98a3c0" />
      </linearGradient>
    </defs>
    <path d="M1 73Q3 98 5 109Q12 133 36 151L34 116Z" fill="url(#sideLight)" />
    <path d="M33 116L36 151Q80 180 154 180Q226 180 275 151Q300 134 302 110L306 73L297 95Z" fill="url(#side)" />
    <path d="M153 60V1A153 72 0 0 1 297 94Z" fill="#486797" />
    <path d="M153 60L297 94A153 72 0 0 1 33 115Z" fill="#5b7eb9" />
    <path d="M153 60L33 115A153 72 0 0 1 153 1Z" fill="#aab4d4" />
    <PieText x="71" y="43">Technology</PieText>
    <PieText x="71" y="59">38%</PieText>
    <PieText x="222" y="33">Furniture</PieText>
    <PieText x="222" y="49">32%</PieText>
    <PieText x="166" y="104">Office</PieText>
    <PieText x="166" y="120">Supplies</PieText>
    <PieText x="166" y="135">30%</PieText>
  </svg>
);

const HomeRibbon = () => (
  <Ribbon>
    <RibbonGroup name="Clipboard" w={203} pad={1} launcher>
      <Big w={62} icon={<PasteIcon />} top="Paste" arrow />
      <Stack $top={5}>
        <SmallButton $gap={5}><IconSlot $w={24}><CutIcon /></IconSlot>Cut</SmallButton>
        <SmallButton $gap={5}><IconSlot $w={24}><CopyIcon /></IconSlot>Copy <Caret /></SmallButton>
        <SmallButton $gap={5}><IconSlot $w={24}><PainterIcon /></IconSlot>Format Painter</SmallButton>
      </Stack>
    </RibbonGroup>

    <RibbonGroup name="Font" w={267} pad={5} launcher>
      <Stack $top={14} $gap={11}>
        <ToolRow>
          <Picker label="Font" value="Calibri" w={141} joined />
          <Picker label="Font size" value="11" w={57} />
          <SizeButton aria-label="Grow font" $w={32}><Glyph $size={25}>A</Glyph><Caret color="#2d4f9a" size={6} up /></SizeButton>
          <SizeButton aria-label="Shrink font" $w={28}><Glyph $size={19}>A</Glyph><Caret color="#2d4f9a" size={6} /></SizeButton>
        </ToolRow>
        <ToolRow>
          <Tool label="Bold" w={30}><Glyph>B</Glyph></Tool>
          <Tool label="Italic" w={34}><Glyph $italic>I</Glyph></Tool>
          <Tool label="Underline" w={28}><Glyph $light $underline $size={22}>U</Glyph></Tool>
          <Tool label="Underline styles" w={12}><Caret /></Tool>
          <Divider />
          <Tool label="Borders" w={27}><BordersIcon /></Tool>
          <Tool label="Border styles" w={14}><Caret /></Tool>
          <Divider />
          <Tool label="Fill color"><FillColorIcon /></Tool>
          <Tool label="Fill colors" w={16}><Caret /></Tool>
          <Tool label="Font color" w={28}><FontColorIcon /></Tool>
          <Tool label="Font colors" w={12}><Caret /></Tool>
        </ToolRow>
      </Stack>
    </RibbonGroup>

    <RibbonGroup name="Alignment" w={341} launcher>
      <Stack $top={14} $gap={11} $w={163}>
        <ToolRow>
          <Tool label="Top align" w={32}><LinesIcon kind="top" /></Tool>
          <Tool label="Middle align" w={32}><LinesIcon kind="top" offset={4} /></Tool>
          <Pressed aria-label="Bottom align" $w={30}><LinesIcon kind="top" offset={8} /></Pressed>
          <Divider />
          <Tool label="Orientation"><OrientationIcon /></Tool>
          <Tool label="Orientation options" w={12}><Caret /></Tool>
        </ToolRow>
        <ToolRow>
          <Tool label="Align left" w={32}><LinesIcon kind="left" /></Tool>
          <Tool label="Center" w={30}><LinesIcon kind="center" /></Tool>
          <Tool label="Align right" w={32}><LinesIcon kind="right" /></Tool>
          <Divider />
          <Tool label="Decrease indent" w={24}><IndentIcon /></Tool>
          <Tool label="Increase indent" w={32}><IndentIcon flip /></Tool>
        </ToolRow>
      </Stack>
      <Stack $top={15}><Divider $h={74} /></Stack>
      <Stack $top={15} $gap={11}>
        <SmallButton $gap={4}><WrapIcon />Wrap Text</SmallButton>
        <SmallButton $gap={4}><MergeIcon />Merge &amp; Center <Caret /></SmallButton>
      </Stack>
    </RibbonGroup>

    <RibbonGroup name="Number" w={186} launcher>
      <Stack $top={14} $gap={11}>
        <ToolRow><Picker label="Number format" value="General" w={177} /></ToolRow>
        <ToolRow>
          <Tool label="Accounting format" w={32}><Glyph>$</Glyph></Tool>
          <Tool label="Accounting formats" w={12}><Caret /></Tool>
          <Tool label="Percent" w={32}><Glyph $light $sans $size={20}>%</Glyph></Tool>
          <Tool label="Comma style" w={30}><CommaIcon /></Tool>
          <Divider />
          <Tool label="Increase decimal" w={26}><DecimalIcon /></Tool>
          <Tool label="Decrease decimal" w={34}><DecimalIcon flip /></Tool>
        </ToolRow>
      </Stack>
    </RibbonGroup>

    <RibbonGroup name="Styles" w={232}>
      <Big w={94} icon={<ConditionalIcon />} top="Conditional" bottom="Formatting" arrow />
      <Big w={70} icon={<FormatTableIcon />} top="Format" bottom="as Table" arrow />
      <Big w={60} icon={<CellStylesIcon />} top="Cell" bottom="Styles" arrow />
    </RibbonGroup>

    <RibbonGroup name="Cells" w={183}>
      <Big w={58} icon={<InsertIcon />} top="Insert" arrow />
      <Big w={58} icon={<DeleteIcon />} top="Delete" arrow />
      <Big w={58} icon={<FormatCellsIcon />} top="Format" arrow />
    </RibbonGroup>

    <RibbonGroup name="Editing" w={236} pad={9}>
      <Stack $top={3} $w={107}>
        <SmallButton $gap={5} $h={30}><IconSlot $w={20}><Glyph>Σ</Glyph></IconSlot>AutoSum <Caret /></SmallButton>
        <SmallButton $gap={5} $h={30}><FillIcon />Fill <Caret /></SmallButton>
        <SmallButton $gap={4} $h={30}><ClearIcon />Clear <Caret /></SmallButton>
      </Stack>
      <Big w={56} icon={<SortIcon />} top="Sort &" bottom="Filter" arrow />
      <Big w={58} icon={<FindIcon />} top="Find &" bottom="Select" arrow />
    </RibbonGroup>
  </Ribbon>
);

const DashboardSheet = () => (
  <Canvas>
    <Banner>SUPER STORE REPORT</Banner>
    <Dashboard>
      <SlicerColumn>
        <Slicer $h={123} $after={6}>
          <SlicerHead><FilterClearIcon /></SlicerHead>
          <SlicerBody>
            <SlicerList>
              {['2011', '2012', '2013', '2014'].map(y => <SlicerItem key={y}>{y}</SlicerItem>)}
            </SlicerList>
          </SlicerBody>
        </Slicer>
        <Slicer $h={131} $after={10}>
          <SlicerHead><FilterClearIcon /></SlicerHead>
          <SlicerBody>
            <SlicerList>
              {['Critical', 'High', 'Low', 'Medium'].map(p => <SlicerItem key={p}>{p}</SlicerItem>)}
            </SlicerList>
          </SlicerBody>
        </Slicer>
        <Slicer $h={193} $scroll>
          <SlicerHead><FilterClearIcon /></SlicerHead>
          <SlicerBody>
            <SlicerList>
              {COUNTRIES.map(c => <SlicerItem key={c}>{c}</SlicerItem>)}
            </SlicerList>
            <SlicerScroll>
              <Chevron up />
              <SlicerThumb />
              <Chevron />
            </SlicerScroll>
          </SlicerBody>
        </Slicer>
      </SlicerColumn>

      <Middle>
        <Row>
          <KpiColumn>
            <Kpi>
              <KpiLabel>TOTAL<br />PROFIT</KpiLabel>
              <KpiValue $top={29}>1,469,035</KpiValue>
            </Kpi>
            <Kpi $raised>
              <KpiLabel $wide>TOTAL SALES</KpiLabel>
              <KpiValue $top={15}>12642905</KpiValue>
            </Kpi>
          </KpiColumn>
          <Markets>
            <MarketPanel title="MARKET BY PROFIT" band={25} items={PROFIT_BY_MARKET} />
            <MarketPanel title="MARKET BY TOTAL SALES" small band={28} items={SALES_BY_MARKET} />
          </Markets>
        </Row>
        <Row>
          <Chart $w={390}>
            <ChartTitle $top={13} $h={38} $indent={60} $size={13}>PRODUCT SALES %</ChartTitle>
            <PieBox><PieChart /></PieBox>
          </Chart>
          <Chart $w={346}>
            <ChartTitle $top={10} $h={38} $indent={72}>REGION PROFIT</ChartTitle>
            <BarChart data={REGION_PROFIT} labels={97} h={247} thick={11} span={198} gap={7} format={v => v.toLocaleString('en-US')} />
          </Chart>
        </Row>
      </Middle>

      <Chart $w={400}>
        <ChartTitle $top={8} $h={44} $indent={76}>REGION TOTAL QUANTITY SOLD</ChartTitle>
        <BarChart data={REGION_QUANTITY} labels={94} h={276} thick={12} span={237} gap={5} format={String} />
      </Chart>
    </Dashboard>
    <ActiveCell $col={21} $row={34} />
  </Canvas>
);

const App = () => (
  <>
    <GlobalStyle />
    <Window>
      <TabBar>
        <FileTab>File</FileTab>
        <RibbonTab $active>Home</RibbonTab>
        {TABS.map(t => <RibbonTab key={t}>{t}</RibbonTab>)}
        <WindowControls>
          <Tool label="Minimize ribbon" w={14} h={22}>
            <svg width="14" height="12" viewBox="0 0 14 12" fill="none" stroke="#50545a" strokeWidth="1.300">
              <path d="M1 7l6-6 6 6v3H9.500L7 7.500 4.500 10H1z" />
            </svg>
          </Tool>
          <Tool label="Help" w={24} h={22}>
            <svg width="24" height="24" viewBox="0 0 24 24">
              <circle cx="12" cy="11" r="11.500" fill="#4f7bcb" stroke="#3c62ad" />
              <text x="12" y="17" textAnchor="middle" fontFamily="Open Sans" fontSize="17" fontWeight="700" fill="#fff">?</text>
            </svg>
          </Tool>
          <Tool label="Minimize" w={17} h={22}>
            <svg width="17" height="8" viewBox="0 0 17 8">
              <rect x="1" y="1" width="15" height="6" rx="1" fill="#fff" stroke="#50545a" strokeWidth="1.800" />
            </svg>
          </Tool>
          <Tool label="Restore" w={18} h={22}>
            <svg width="18" height="17" viewBox="0 0 18 17" fill="#fff" stroke="#50545a" strokeWidth="1.700">
              <path d="M6.500 1h10.500v9H6.500zM10 4h4v3h-4z" />
              <path d="M1 6h10.500v10H1zM4 10h4.500v3H4z" />
            </svg>
          </Tool>
          <Tool label="Close" w={18} h={22}>
            <svg width="18" height="14" viewBox="0 0 18 14" fill="#fff" stroke="#50545a" strokeWidth="1.500">
              <path d="M1 1h5l3 3 3-3h5v2l-4 4 4 4v2h-5l-3-3-3 3H1v-2l4-4-4-4z" />
            </svg>
          </Tool>
        </WindowControls>
      </TabBar>

      <HomeRibbon />

      <QuickAccess>
        <Tool label="Save"><SaveIcon /></Tool>
        <Tool label="Undo" w={36}><UndoIcon /></Tool>
        <Tool label="Undo list" w={6}><Caret color="#111" size={6} /></Tool>
        <Tool label="Redo" w={36}><UndoIcon color="#a9acb1" flip /></Tool>
        <Tool label="Redo list" w={6}><Caret color="#a0a3a8" size={6} /></Tool>
        <Tool label="Customize toolbar" w={38}>
          <svg width="10" height="10" viewBox="0 0 10 10">
            <path d="M0 1h10" stroke="#111" strokeWidth="1.500" />
            <path d="M1 5h8L5 9z" fill="#111" />
          </svg>
        </Tool>
      </QuickAccess>

      <FormulaBar>
        <NameBox>
          <NameInput aria-label="Name box" defaultValue="V35" />
          <Tool label="Named cells"><Caret color="#303338" size={11} /></Tool>
        </NameBox>
        <FxArea>
          <FxPill>
            <FxDot />
            <Glyph $italic $size={20}>fx</Glyph>
          </FxPill>
        </FxArea>
        <FormulaInput aria-label="Formula" />
        <Tool label="Expand formula bar"><Chevron heavy /></Tool>
      </FormulaBar>

      <Workbook>
        <SheetArea>
          <ColumnHeads>
            <Corner>
              <svg width="8" height="8" viewBox="0 0 8 8"><path d="M8 0v8H0z" fill="#b9bdc4" /></svg>
            </Corner>
            {COLUMNS.map(c => <ColumnHead key={c} $active={c === 'V'}>{c}</ColumnHead>)}
          </ColumnHeads>
          <SheetBody>
            <RowHeads>
              {ROWS.map(r => <RowHead key={r} $active={r === 35}>{r}</RowHead>)}
            </RowHeads>
            <DashboardSheet />
          </SheetBody>
        </SheetArea>
        <VScroll>
          <SplitHandle />
          <Tool label="Scroll up" h={26}><Triangle dir="up" /></Tool>
          <ScrollThumb $vertical><Grip vertical /></ScrollThumb>
          <Tool label="Scroll down" h={28}><Triangle dir="down" /></Tool>
        </VScroll>
      </Workbook>

      <SheetTabs>
        <TabNav>
          <Tool label="First sheet" h={24}><NavArrow left bar /></Tool>
          <Tool label="Previous sheet" h={24}><NavArrow left /></Tool>
          <Tool label="Next sheet" h={24}><NavArrow /></Tool>
          <Tool label="Last sheet" h={24}><NavArrow bar /></Tool>
        </TabNav>
        <SheetTab $w={332} $edge>SuperStoreOrders - SuperStoreOr</SheetTab>
        <TabSlant />
        <SheetTab $w={52}>Pivot</SheetTab>
        <SheetTab $w={118} $active $edge>Dashboard</SheetTab>
        <Tool label="New sheet" w={44} h={24}><NewSheetIcon /></Tool>
        <HScroll>
          <SplitHandle $vertical />
          <Tool label="Scroll left" w={27} h={24}><Triangle dir="left" /></Tool>
          <ScrollThumb><Grip /></ScrollThumb>
          <Tool label="Scroll right" w={45} h={24}><Triangle dir="right" /></Tool>
          <SplitHandle $vertical />
        </HScroll>
      </SheetTabs>

      <StatusBar>
        <StatusText>Ready</StatusText>
        <StatusTools>
          <ViewButton aria-label="Normal view" $w={27} $h={28} $active>
            <svg width="20" height="15" viewBox="0 0 20 15">
              <rect width="20" height="15" fill="#6a6d72" />
              <path d="M1.500 1.500h5v3h-5zM7.500 1.500h5v3h-5zM13.500 1.500h5v3h-5zM1.500 6h5v3h-5zM7.500 6h5v3h-5zM13.500 6h5v3h-5zM1.500 10.500h5v3h-5zM7.500 10.500h5v3h-5zM13.500 10.500h5v3h-5z" fill="#fff" />
            </svg>
          </ViewButton>
          <ViewButton aria-label="Page layout view" $w={28} $h={28}>
            <svg width="21" height="18" viewBox="0 0 21 18">
              <rect x="1" y="1" width="19" height="16" fill="#b5b8bd" stroke="#5d6066" strokeWidth="2" />
              <rect x="6" y="4" width="9" height="11" fill="#f2f3f5" stroke="#5d6066" />
              <path d="M8 7h5M8 9.500h5M8 12h5" stroke="#5d6066" />
            </svg>
          </ViewButton>
          <ViewButton aria-label="Page break preview" $w={28} $h={28}>
            <svg width="21" height="18" viewBox="0 0 21 18">
              <rect x="1" y="1" width="19" height="16" fill="#a4a8ae" stroke="#6a6d72" strokeWidth="1.500" />
              <path d="M2 2h5v10H2zM8 2h5v10H8z" fill="#f2f3f5" />
            </svg>
          </ViewButton>
          <IconButton as="span" $w={50} $h={28}>50%</IconButton>
          <Tool label="Zoom out" h={28}><RoundIcon /></Tool>
          <ZoomSlider type="range" aria-label="Zoom" min="0" max="100" defaultValue="23" />
          <Tool label="Zoom in" h={28}><RoundIcon plus /></Tool>
        </StatusTools>
      </StatusBar>
    </Window>
  </>
);

export default App;
